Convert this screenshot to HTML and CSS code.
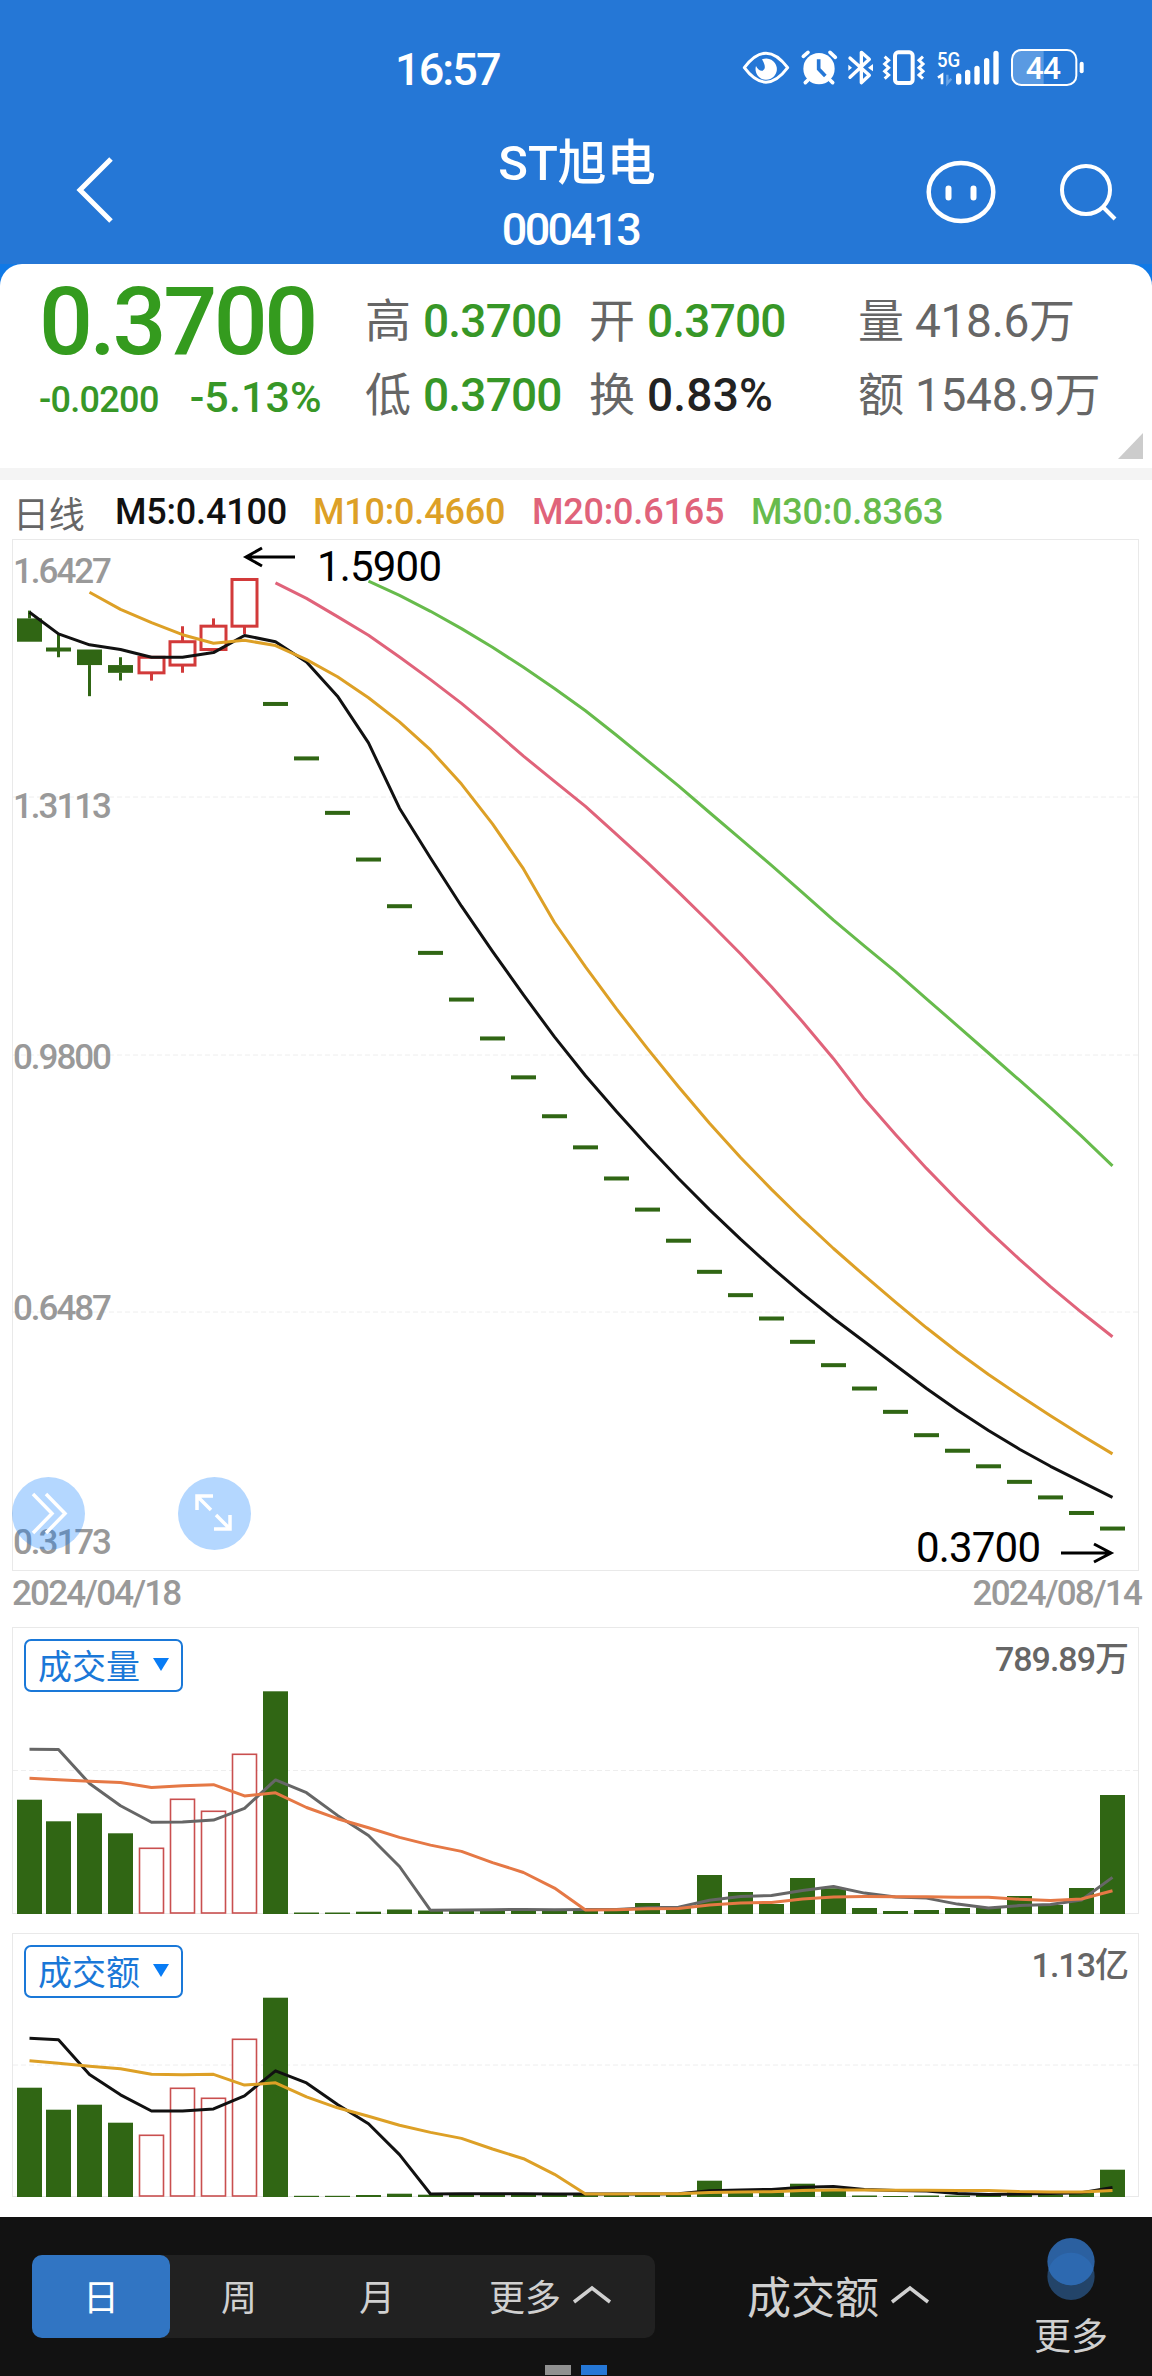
FILE: index.html
```
<!DOCTYPE html>
<html lang="zh-CN">

<head>
    <meta charset="utf-8">
    <title>ST旭电 000413</title>
    <link rel="stylesheet" href="styles.css">
</head>

<body>
    <div class="header">
        <div class="status">
            <span class="time">16:57</span>
            <svg class="status-icons" viewBox="0 0 1200 240">
                <!-- eye -->
                <path d="M73 113Q138 26 203 113Q138 200 73 113Z" fill="none" stroke="#fff" stroke-width="9" stroke-linejoin="round" />
                <path d="M126 88A32 32 0 1 1 108 108Q116 124 128 122Q142 116 126 88Z" fill="#fff" />
                <!-- alarm -->
                <circle cx="297" cy="116" r="47" fill="#fff" />
                <path d="M250 79L264 67M330 67L346 82M264 150L256 158M330 150L338 158" stroke="#fff" stroke-width="11" stroke-linecap="round" />
                <path d="M296 88V117L316 138" fill="none" stroke="#2577d6" stroke-width="11" />
                <!-- bluetooth -->
                <path d="M390 84L448 136L424 158V67L448 88L390 142" fill="none" stroke="#fff" stroke-width="10" stroke-linejoin="round" stroke-linecap="round" />
                <path d="M385 104L396 113L385 122ZM459 102L444 113L459 124Z" fill="#fff" />
                <!-- vibrate -->
                <rect x="525" y="67" width="53" height="92" rx="10" fill="none" stroke="#fff" stroke-width="12" />
                <path d="M494 80L506 91L494 102L506 113L494 124L506 135L494 146M609 80L597 91L609 102L597 113L609 124L597 135L609 146" fill="none" stroke="#fff" stroke-width="9" />
                <!-- signal -->
                <text x="651" y="110" font-size="63" font-weight="500" textLength="70" lengthAdjust="spacingAndGlyphs" fill="#fff">5G</text>
                <path d="M654 143L666 135V163" fill="none" stroke="#fff" stroke-width="8" />
                <path d="M682 134V160L694 146" fill="none" stroke="#69a4e6" stroke-width="7" />
                <path d="M716 138V156M743 127V156M771 115V156M800 92V156M828 70V156" stroke="#fff" stroke-width="16" stroke-linecap="round" />
                <!-- battery -->
                <path d="M971 60H903Q876 60 876 88V137Q876 165 903 165H971Z" fill="#5a9ae2" />
                <rect x="876" y="60" width="193" height="105" rx="28" fill="none" stroke="#fff" stroke-width="6" />
                <path d="M1085 101V124" stroke="#fff" stroke-width="12" stroke-linecap="round" />
                <text x="917" y="147" font-size="95" font-weight="500" textLength="106" fill="#fff">44</text>
            </svg>
        </div>
        <div class="nav">
            <svg class="back" width="50" height="76" viewBox="0 0 50 76">
                <path d="M43 7L12 38L43 69" fill="none" stroke="#fff" stroke-width="5" />
            </svg>
            <div class="title">
                <div class="name">ST旭电</div>
                <div class="code">000413</div>
            </div>
            <svg class="tools" width="200" height="76" viewBox="0 0 200 76">
                <ellipse cx="35" cy="40" rx="32.3" ry="29" fill="none" stroke="#fff" stroke-width="4.5" />
                <path d="M22.5 36.5V45.5M47.5 36.5V45.5" stroke="#fff" stroke-width="6" stroke-linecap="round" />
                <circle cx="160" cy="38" r="24" fill="none" stroke="#fff" stroke-width="4" />
                <path d="M177 55L189 67" stroke="#fff" stroke-width="4" />
            </svg>
        </div>
    </div>

    <div class="quote-wrap">
        <div class="quote">
            <div class="now">
                <div class="price">0.3700</div>
                <div class="change"><span>-0.0200</span><span class="percent">-5.13%</span></div>
            </div>
            <div class="stats">
                <span class="label">高</span><span class="green">0.3700</span>
                <span class="label">开</span><span class="green">0.3700</span>
                <span class="label">量</span><span class="gray">418.6万</span>
                <span class="label">低</span><span class="green">0.3700</span>
                <span class="label">换</span><span class="dark">0.83%</span>
                <span class="label">额</span><span class="gray">1548.9万</span>
            </div>
            <div class="fold"></div>
        </div>
    </div>

    <div class="averages">
        <span class="period">日线</span>
        <span class="m5">M5:0.4100</span>
        <span class="m10">M10:0.4660</span>
        <span class="m20">M20:0.6165</span>
        <span class="m30">M30:0.8363</span>
    </div>

    <div class="chart">
        <svg id="kline" width="1152" height="1032"></svg>
        <svg class="round expand" viewBox="0 0 73 73">
            <circle cx="36.5" cy="36.5" r="36.5" />
            <path d="M21 17L40 36.5L21 56M34 17L53 36.5L34 56" />
        </svg>
        <svg class="round full" viewBox="0 0 73 73">
            <circle cx="36.5" cy="36.5" r="36.5" />
            <path d="M35 19H19V33M19 19L33 33M36 52H52V38M52 52L38 38" />
        </svg>
    </div>
    <div class="dates">
        <span>2024/04/18</span>
        <span>2024/08/14</span>
    </div>

    <div class="chart">
        <svg id="volume" width="1152" height="287"></svg>
        <div class="picker">成交量<i></i></div>
        <div class="max">789.89万</div>
    </div>
    <div class="chart second">
        <svg id="turnover" width="1152" height="264"></svg>
        <div class="picker">成交额<i></i></div>
        <div class="max">1.13亿</div>
    </div>

    <div class="footer">
        <div class="tabs">
            <div class="tab active">日</div>
            <div class="tab">周</div>
            <div class="tab">月</div>
            <div class="tab wide">更多
                <svg width="40" height="22" viewBox="0 0 40 22"><path d="M2 18L20 4L38 18" /></svg>
            </div>
        </div>
        <div class="select">成交额
            <svg width="40" height="22" viewBox="0 0 40 22"><path d="M2 18L20 4L38 18" /></svg>
        </div>
        <div class="more">
            <svg width="50" height="64" viewBox="0 0 50 64">
                <circle cx="25" cy="40" r="24" fill="#234469" />
                <circle cx="25" cy="25" r="24" fill="#2b60a0" />
                <path d="M2.2 32.5A24 24 0 0 1 47.8 32.5A24 24 0 0 1 2.2 32.5Z" fill="#2d69b0" />
            </svg>
            <span>更多</span>
        </div>
        <div class="pager"><b></b><b class="on"></b></div>
    </div>

    <script>
        const NS = 'http://www.w3.org/2000/svg';
        const GREEN = '#306614';
        const RED = '#d23a3a';

        // open, close, high, low
        const days = [
            [1.54, 1.51, 1.55, 1.51], [1.50, 1.50, 1.52, 1.49], [1.50, 1.48, 1.50, 1.44], [1.48, 1.47, 1.49, 1.46],
            [1.47, 1.49, 1.49, 1.46], [1.48, 1.51, 1.53, 1.47], [1.50, 1.53, 1.54, 1.50], [1.53, 1.59, 1.59, 1.52]
        ];
        const limitDown = [1.43, 1.36, 1.29, 1.23, 1.17, 1.11, 1.05, 1.00, .95, .90, .86, .82, .78, .74, .70, .67,
            .64, .61, .58, .55, .52, .49, .47, .45, .43, .41, .39, .37];
        limitDown.forEach(p => days.push([p, p, p, p]));

        // values before the first visible day, oldest first
        const oldClose = [1.72, 1.72, 1.72, 1.72, 1.72, 1.72, 1.72, 1.76, 1.76, 1.71, 1.73, 1.69, 1.66, 1.665, 1.64, 1.55, 1.50, 1.54];
        const oldVolume = [107, 117, 91, 116, 98, 93, 271, 192, 148];
        const oldTurnover = [114, 122, 98, 118, 113, 94, 266, 176, 143];

        const volume = [114.3, 92.7, 100.7, 80.7, 65.7, 114.7, 102.7, 159.7, 222.7, 1.5, 1.5, 2.3, 4.5, 3.5, 3, 3, 3.5, 3.5,
            4, 4, 11, 6, 39, 22, 10, 36, 25.7, 6, 3, 4, 6, 6, 18, 9, 26, 119];
        const turnover = [109.3, 87.3, 92.3, 74.3, 61.7, 108.7, 98.7, 157.7, 199.3, 1.2, 1.2, 2, 3.3, 2.3, 2, 2, 2, 2,
            2, 2, 2.5, 3, 16.3, 6.5, 4.7, 13.3, 7, 1.5, 1, 1.5, 1.5, 2, 4.7, 2.5, 6, 27.3];

        function add(svg, name, attrs, text) {
            const el = document.createElementNS(NS, name);
            for (const key in attrs) el.setAttribute(key, attrs[key]);
            if (text) el.textContent = text;
            svg.appendChild(el);
        }

        function dayX(i) {
            return i === 0 ? 29.5 : 58.5 + (i - 1) * 31;
        }

        function average(svg, old, list, size, start, color, toY) {
            const all = old.concat(list);
            const points = [];
            for (let i = start; i < list.length; i++) {
                const end = i + old.length + 1;
                const sum = all.slice(end - size, end).reduce((a, b) => a + b, 0);
                points.push(dayX(i) + ',' + toY(sum / size).toFixed(1));
            }
            add(svg, 'polyline', { points: points.join(' '), fill: 'none', stroke: color, 'stroke-width': 3, 'stroke-linejoin': 'round' });
        }

        function frame(svg, height, lines) {
            lines.forEach(y => add(svg, 'line', { x1: 13, x2: 1139, y1: y, y2: y, stroke: '#eee', 'stroke-dasharray': '5 3' }));
            add(svg, 'rect', { x: 12.5, y: .5, width: 1126, height: height - 1, fill: 'none', stroke: '#e9e9e9' });
        }

        // candles
        const kline = document.getElementById('kline');
        const priceY = p => (1.6427 - p) * 777.9 - .5;
        frame(kline, 1032, [258, 516, 773]);
        [['1.6427', 44], ['1.3113', 279], ['0.9800', 530], ['0.6487', 781], ['0.3173', 1015]].forEach(a =>
            add(kline, 'text', { x: 13, y: a[1], class: 'axis', textLength: 99 }, a[0]));
        days.forEach((d, i) => {
            const x = dayX(i);
            const top = priceY(Math.max(d[0], d[1]));
            const bottom = priceY(Math.min(d[0], d[1]));
            const up = d[1] > d[0];
            const color = up ? RED : GREEN;
            add(kline, 'path', { d: `M${x} ${priceY(d[2])}V${top}M${x} ${bottom}V${priceY(d[3])}`, stroke: color, 'stroke-width': 3 });
            if (up) {
                add(kline, 'rect', { x: x - 12.5, y: top, width: 25, height: bottom - top, fill: '#fff', stroke: color, 'stroke-width': 3 });
            } else {
                const h = Math.max(bottom - top, 4);
                add(kline, 'rect', { x: x - 12.5, y: (top + bottom - h) / 2, width: 25, height: h, fill: color });
            }
        });
        const closes = days.map(d => d[1]);
        average(kline, oldClose, closes, 5, 0, '#111', priceY);
        average(kline, oldClose, closes, 10, 2, '#dda026', priceY);
        average(kline, oldClose, closes, 20, 8, '#e0637a', priceY);
        average(kline, oldClose, closes, 30, 11, '#67bb4c', priceY);
        add(kline, 'path', { d: 'M295 18H246M262 9L246 18L262 27M1061 1014H1111M1094 1005L1111 1014L1094 1023', fill: 'none', stroke: '#000', 'stroke-width': 3 });
        add(kline, 'text', { x: 317, y: 42, class: 'mark', textLength: 125 }, '1.5900');
        add(kline, 'text', { x: 916, y: 1023, class: 'mark', textLength: 125 }, '0.3700');

        function bars(id, height, middle, old, list, color5, color10) {
            const svg = document.getElementById(id);
            frame(svg, height, [middle]);
            list.forEach((v, i) => {
                const x = dayX(i);
                if (i > 3 && i < 8) {
                    add(svg, 'rect', { x: x - 12, y: height - v, width: 24, height: v - 1, fill: '#fff', stroke: '#c94f4f', 'stroke-width': 1.6 });
                } else {
                    add(svg, 'rect', { x: x - 12.5, y: height - v, width: 25, height: v, fill: GREEN });
                }
            });
            average(svg, old, list, 5, 0, color5, v => height - 1 - v);
            average(svg, old, list, 10, 0, color10, v => height - 1 - v);
        }
        bars('volume', 287, 143.5, oldVolume, volume, '#666', '#e57845');
        bars('turnover', 264, 132, oldTurnover, turnover, '#111', '#dda026');
    </script>
</body>

</html>
```
FILE: styles.css
```
* {
    box-sizing: border-box;
}

body {
    margin: 0;
    width: 1152px;
    height: 2376px;
    overflow: hidden;
    background: #fff;
    font-family: Roboto, "Noto Sans CJK SC", sans-serif;
    white-space: nowrap;
}

svg {
    display: block;
}

.header {
    height: 264px;
    padding-top: 30px;
    background: #2577d6;
    color: #fff;
}

.status {
    display: flex;
    height: 80px;
    padding-left: 395px;
}

.time {
    width: 325px;
    padding-top: 13px;
    font-size: 45px;
    font-weight: 500;
    line-height: 53px;
    letter-spacing: -1.9px;
}

.status-icons {
    width: 400px;
    height: 80px;
}

.nav {
    display: grid;
    grid-template-columns: 68px 384px 250px 224px 200px;
    padding-top: 18px;
}

.back {
    grid-column: 2;
    margin-top: 24px;
}

.title {
    grid-column: 3;
    text-align: center;
}

.name {
    font-size: 49px;
    font-weight: 500;
    line-height: 72px;
}

.code {
    margin-top: 2px;
    margin-right: 13px;
    font-size: 45px;
    font-weight: 500;
    line-height: 56px;
    letter-spacing: -2.7px;
}

.tools {
    grid-column: 5;
    margin-top: 24px;
}

.quote-wrap {
    background: #1079e6;
}

.quote {
    display: flex;
    position: relative;
    height: 204px;
    padding-left: 39px;
    background: #fff;
    border-radius: 22px 22px 0 0;
}

.now {
    width: 326px;
    color: #379727;
}

.price {
    margin-top: 11px;
    color: #349b1e;
    font-size: 95px;
    font-weight: 500;
    line-height: 94px;
    letter-spacing: -3.4px;
}

.change {
    display: flex;
    align-items: baseline;
    font-size: 36px;
    font-weight: 500;
    line-height: 57px;
    letter-spacing: -.7px;
}

.percent {
    margin-left: 31px;
    font-size: 43px;
    letter-spacing: .1px;
}

.stats {
    display: grid;
    grid-template-columns: 58px 166px 58px 211px 57px 200px;
    grid-template-rows: 74px 74px;
    margin-top: 20px;
    font-size: 46px;
    line-height: 74px;
    letter-spacing: -.8px;
}

.label {
    color: #666;
}

.green {
    color: #379727;
    font-weight: 500;
}

.gray {
    color: #666;
    letter-spacing: -.3px;
}

.dark {
    color: #222;
    font-weight: 500;
    letter-spacing: .2px;
}

.fold {
    position: absolute;
    right: 9px;
    bottom: 9px;
    border-left: 25px solid transparent;
    border-bottom: 26px solid #ccc;
}

.averages {
    display: flex;
    align-items: center;
    height: 71px;
    padding: 4px 0 0 13px;
    border-top: 12px solid #f4f4f4;
    font-size: 36px;
    font-weight: 500;
    letter-spacing: -.2px;
}

.period {
    width: 102px;
    color: #666;
    font-weight: 400;
}

.m5 {
    width: 198px;
    color: #111;
}

.m10 {
    width: 219px;
    color: #dda026;
}

.m20 {
    width: 219px;
    color: #e0637a;
}

.m30 {
    color: #67bb4c;
}

.chart {
    position: relative;
}

.axis {
    fill: #999;
    font-size: 35px;
    font-weight: 500;
}

.mark {
    fill: #000;
    font-size: 42px;
}

.round {
    position: absolute;
    bottom: 21px;
    width: 73px;
    height: 73px;
}

.round circle {
    fill: rgba(8, 124, 255, .3);
}

.round path {
    fill: none;
    stroke: #fff;
    stroke-width: 3.5;
}

.expand {
    left: 12px;
}

.full {
    left: 178px;
}

.dates {
    display: flex;
    justify-content: space-between;
    height: 56px;
    padding: 0 11px 0 12px;
    color: #999;
    font-size: 35px;
    font-weight: 500;
    line-height: 45px;
    letter-spacing: -1.8px;
}

.second {
    margin-top: 19px;
}

.picker {
    display: flex;
    position: absolute;
    top: 12px;
    left: 24px;
    width: 159px;
    height: 53px;
    padding: 0 0 3px 12px;
    align-items: center;
    border: 2px solid #1a78d8;
    border-radius: 7px;
    color: #1a78d8;
    font-size: 34px;
}

.picker i {
    margin-left: 13px;
    border-top: 13px solid #087cf5;
    border-left: 8px solid transparent;
    border-right: 8px solid transparent;
}

.max {
    position: absolute;
    top: 8px;
    right: 24px;
    color: #666;
    font-size: 34px;
    font-weight: 500;
    line-height: 48px;
    letter-spacing: -1px;
}

.footer {
    display: flex;
    position: relative;
    height: 159px;
    margin-top: 20px;
    padding: 38px 0 0 32px;
    background: #121212;
    color: #d0d0d0;
}

.footer path {
    stroke-width: 3.5;
}

.tabs {
    display: flex;
    width: 623px;
    height: 83px;
    background: #212121;
    border-radius: 10px;
    font-size: 36px;
}

.tab {
    display: flex;
    width: 138px;
    padding-bottom: 4px;
    align-items: center;
    justify-content: center;
}

.wide {
    width: 209px;
    gap: 11px;
}

.active {
    background: #3175c3;
    border-radius: 10px;
    color: #fff;
}

.tab path,
.select path {
    fill: none;
    stroke: #d0d0d0;
}

.select {
    display: flex;
    height: 79px;
    margin-left: 92px;
    align-items: center;
    gap: 11px;
    font-size: 44px;
}

.more {
    display: flex;
    flex-direction: column;
    align-items: center;
    margin: -18px 0 0 104px;
    font-size: 37px;
    line-height: 76px;
}

.pager {
    display: flex;
    position: absolute;
    left: 545px;
    bottom: 1px;
    gap: 10px;
}

.pager b {
    width: 26px;
    height: 10px;
    background: #909090;
}

.pager .on {
    background: #2577d6;
}
```
